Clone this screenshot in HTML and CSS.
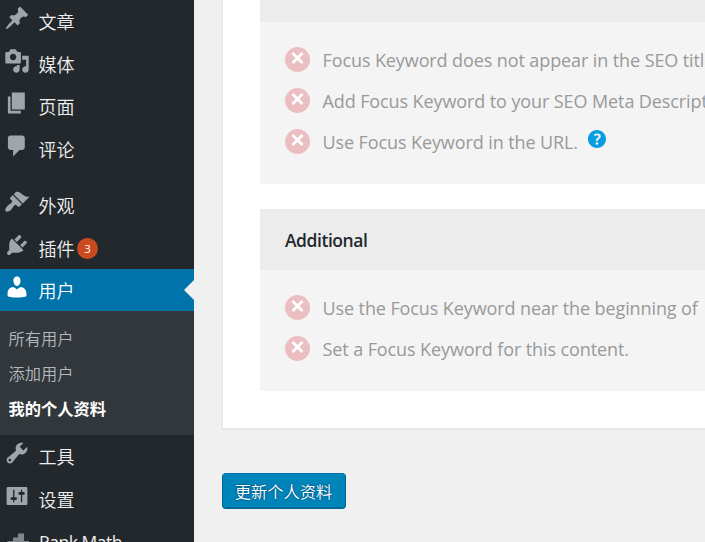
FILE: index.html
```html
<!DOCTYPE html>
<html lang="zh-CN">
<head>
<meta charset="utf-8">
<title>个人资料</title>
<link rel="stylesheet" href="styles.css">
</head>
<body>
<nav class="sidebar">
  <a class="item"><svg class="icon" viewBox="0 0 20 20"><path d="M10.44 3.02l1.82-1.82 6.36 6.35-1.83 1.82c-1.05-.68-2.48-.57-3.41.36l-.75.75c-.92.93-1.04 2.35-.35 3.41l-1.83 1.82-2.41-2.41-2.8 2.79c-.42.42-3.38 2.71-3.8 2.29s1.86-3.39 2.28-3.81l2.79-2.79L4.1 9.36l1.83-1.82c1.05.69 2.48.57 3.4-.36l.75-.75c.93-.92 1.05-2.35.36-3.41z"/></svg><span>文章</span></a>
  <a class="item"><svg class="icon" viewBox="0 0 20 20"><path d="M13 11V4c0-.55-.45-1-1-1h-1.67L9 1H5L3.67 3H2c-.55 0-1 .45-1 1v7c0 .55.45 1 1 1h10c.55 0 1-.45 1-1zM7 4.5c1.38 0 2.5 1.12 2.5 2.5S8.38 9.5 7 9.5 4.5 8.38 4.5 7 5.62 4.5 7 4.5zM14 6h5v10.5c0 1.38-1.12 2.5-2.5 2.5S14 17.88 14 16.5s1.12-2.5 2.5-2.5c.17 0 .34.02.5.05V9h-3V6zm-4 8.05V13h2v3.5c0 1.38-1.12 2.5-2.5 2.5S7 17.88 7 16.5 8.12 14 9.5 14c.17 0 .34.02.5.05z"/></svg><span>媒体</span></a>
  <a class="item"><svg class="icon" viewBox="0 0 20 20"><path d="M6 15V2h10v13H6zm-1 1h8v2H3V5h2v11z"/></svg><span>页面</span></a>
  <a class="item"><svg class="icon" viewBox="0 0 20 20"><path d="M5 2h9c1.1 0 2 .9 2 2v7c0 1.1-.9 2-2 2h-2l-5 5v-5H5c-1.1 0-2-.9-2-2V4c0-1.1.9-2 2-2z"/></svg><span>评论</span></a>
  <div class="separator"></div>
  <a class="item"><svg class="icon" viewBox="0 0 20 20"><path d="M14.48 11.06L7.41 3.99l1.5-1.5c.5-.56 2.3-.47 3.51.32 1.21.8 1.43 1.28 2.91 2.1 1.18.64 2.45 1.26 4.45.85zm-.71.71L6.7 4.7 4.93 6.47c-.39.39-.39 1.02 0 1.41l1.06 1.06c.39.39.39 1.03 0 1.42-.6.6-1.43 1.11-2.21 1.69-.35.26-.7.53-1.01.84C1.43 14.23.4 16.08 1.4 17.07c.99 1 2.84-.03 4.18-1.36.31-.31.58-.66.85-1.02.57-.78 1.08-1.61 1.69-2.21.39-.39 1.02-.39 1.41 0l1.06 1.06c.39.39 1.02.39 1.41 0z"/></svg><span>外观</span></a>
  <a class="item"><svg class="icon" viewBox="0 0 20 20"><path d="M13.11 4.36L9.87 7.6 8 5.73l3.24-3.24c.35-.34 1.05-.2 1.56.32.52.51.66 1.21.31 1.55zm-8 1.77l.91-1.12 9.01 9.01-1.19.84c-.71.71-2.63 1.16-3.82 1.16H6.14L4.9 17.26c-.59.59-1.54.59-2.12 0-.59-.58-.59-1.53 0-2.12l1.24-1.24v-3.88c0-1.13.4-3.19 1.09-3.89zm7.26 3.97l3.24-3.24c.34-.35 1.04-.21 1.55.31.52.51.66 1.21.31 1.55l-3.24 3.25z"/></svg><span>插件</span><b class="count">3</b></a>
  <a class="item current"><svg class="icon" viewBox="0 0 20 20"><path d="M10 9.25c-2.27 0-2.73-3.44-2.73-3.44C7 4.02 7.82 2 9.97 2c2.16 0 2.98 2.02 2.71 3.81 0 0-.41 3.44-2.68 3.44zm0 2.57L12.72 10c2.39 0 4.52 2.33 4.52 4.53v2.49s-3.65 1.13-7.24 1.13c-3.65 0-7.24-1.13-7.24-1.13v-2.49c0-2.25 1.94-4.48 4.47-4.48z"/></svg><span>用户</span></a>
  <div class="submenu">
    <a>所有用户</a>
    <a>添加用户</a>
    <a class="active">我的个人资料</a>
  </div>
  <a class="item"><svg class="icon" viewBox="0 0 20 20"><path d="M16.68 9.77c-1.34 1.34-3.3 1.67-4.95.99l-5.41 6.52c-.99.99-2.59.99-3.58 0s-.99-2.59 0-3.57l6.52-5.42c-.68-1.65-.35-3.61.99-4.95 1.28-1.28 3.12-1.62 4.72-1.06l-2.89 2.89 2.82 2.82 2.86-2.87c.53 1.58.18 3.39-1.08 4.65zM3.81 16.21c.4.39 1.04.39 1.43 0 .4-.4.4-1.04 0-1.43-.39-.4-1.03-.4-1.43 0-.39.39-.39 1.03 0 1.43z"/></svg><span>工具</span></a>
  <a class="item"><svg class="icon" viewBox="0 0 20 20"><path d="M18 16V4c0-.55-.45-1-1-1H3c-.55 0-1 .45-1 1v12c0 .55.45 1 1 1h14c.55 0 1-.45 1-1zM8 11h1c.55 0 1 .45 1 1s-.45 1-1 1H8v1.5c0 .28-.22.5-.5.5s-.5-.22-.5-.5V13H6c-.55 0-1-.45-1-1s.45-1 1-1h1V5.5c0-.28.22-.5.5-.5s.5.22.5.5V11zm5-2h-1c-.55 0-1-.45-1-1s.45-1 1-1h1V5.5c0-.28.22-.5.5-.5s.5.22.5.5V7h1c.55 0 1 .45 1 1s-.45 1-1 1h-1v5.5c0 .28-.22.5-.5.5s-.5-.22-.5-.5V9z"/></svg><span>设置</span></a>
  <a class="item"><svg class="icon dim" viewBox="0 0 26 26"><path d="M3.500 14h5.500V10.500h5V6.500h6V14h5V23H3.500z"/></svg><span class="latin">Rank Math</span></a>
</nav>
<main class="content">
  <section class="card">
    <div class="group">
      <h3 class="group-title"></h3>
      <ul class="checks">
        <li><i class="fail"><svg viewBox="0 0 26 26"><path d="M7.500 6l10 10M17.500 6l-10 10"/></svg></i><span>Focus Keyword does not appear in the SEO title.</span></li>
        <li><i class="fail"><svg viewBox="0 0 26 26"><path d="M7.500 6l10 10M17.500 6l-10 10"/></svg></i><span>Add Focus Keyword to your SEO Meta Description.</span></li>
        <li><i class="fail"><svg viewBox="0 0 26 26"><path d="M7.500 6l10 10M17.500 6l-10 10"/></svg></i><span>Use Focus Keyword in the URL.</span><svg class="help" viewBox="3 3 14 14"><path d="M17 10c0-3.87-3.14-7-7-7-3.87 0-7 3.13-7 7s3.130 7 7 7c3.860 0 7-3.130 7-7zm-6.300 1.480H9.140v-.43c0-.38.08-.7.24-.98s.46-.57.88-.89c.41-.29.68-.53.81-.71.14-.18.2-.39.2-.62 0-.25-.09-.44-.28-.58-.19-.13-.45-.19-.79-.19-.58 0-1.250.19-2 .57l-.64-1.280c.87-.49 1.800-.74 2.770-.74.81 0 1.450.2 1.920.58.48.39.71.91.71 1.550 0 .43-.09.8-.29 1.110-.19.32-.57.67-1.110 1.060-.38.28-.61.49-.71.63-.1.15-.15.34-.15.57v.35zm-1.470 2.740c-.18-.17-.27-.42-.27-.73 0-.33.08-.58.26-.75s.43-.25.77-.25c.32 0 .57.09.75.26s.27.42.27.74c0 .3-.09.55-.27.72-.18.18-.43.27-.75.27-.33 0-.58-.09-.76-.26z"/></svg></li>
      </ul>
    </div>
    <div class="group">
      <h3 class="group-title">Additional</h3>
      <ul class="checks">
        <li><i class="fail"><svg viewBox="0 0 26 26"><path d="M7.500 6l10 10M17.500 6l-10 10"/></svg></i><span>Use the Focus Keyword near the beginning of</span></li>
        <li><i class="fail"><svg viewBox="0 0 26 26"><path d="M7.500 6l10 10M17.500 6l-10 10"/></svg></i><span>Set a Focus Keyword for this content.</span></li>
      </ul>
    </div>
  </section>
  <button class="submit">更新个人资料</button>
</main>
</body>
</html>
```
FILE: styles.css
```css
* { box-sizing: border-box; }
body {
  margin: 0;
  width: 705px;
  height: 542px;
  overflow: hidden;
  display: flex;
  background: #f0f0f0;
  font-family: "Open Sans", "Noto Sans CJK SC", sans-serif;
}
.sidebar {
  width: 194px;
  flex: none;
  height: 542px;
  overflow: hidden;
  background: #23282d;
}
.item {
  display: flex;
  height: 42.5px;
  padding-left: 3.5px;
  color: #eee;
  font-size: 18px;
  line-height: 42.5px;
}
.item span {
  margin-left: 9px;
  font-family: "Noto Sans CJK SC", sans-serif;
  font-weight: 350;
}
.item .latin {
  margin-left: 9.5px;
  padding-top: 1px;
  font-family: "Open Sans", sans-serif;
  font-size: 17.5px;
  font-weight: 400;
  letter-spacing: -.5px;
}
.icon {
  width: 26px;
  height: 26px;
  flex: none;
  margin-top: 5.3px;
  fill: #a0a5aa;
}
.icon.dim { margin-top: 6.5px; fill: #82878c; }
.count {
  width: 21px;
  height: 21px;
  margin: 11px 0 0 2.5px;
  border-radius: 50%;
  background: #ca4a1f;
  color: #fff;
  font: 11.5px/21px "Open Sans", sans-serif;
  text-align: center;
}
.separator { height: 14px; }
.current {
  position: relative;
  height: 42px;
  background: #0073aa;
  color: #fff;
}
.current .icon { fill: #fff; }
.current::after {
  content: "";
  position: absolute;
  right: 0;
  top: 11px;
  border: 10px solid transparent;
  border-left: 0;
  border-right-color: #f0f0f0;
}
.submenu {
  height: 124px;
  padding: 10px 0 0 8.5px;
  background: #32373c;
}
.submenu a {
  display: block;
  height: 35px;
  font: 350 16.25px/35px "Noto Sans CJK SC", sans-serif;
  color: #b4b9be;
}
.submenu .active { color: #fff; font-weight: 700; }
.content { flex: 1; padding-left: 28px; min-width: 0; }
.card {
  height: 429px;
  padding-left: 37px;
  overflow: hidden;
  background: #fff;
  border: 1px solid #e5e5e5;
  border-top: 0;
  border-right: 0;
  box-shadow: 0 1px 1px rgba(0, 0, 0, .04);
}
.group { background: #f4f4f4; margin-bottom: 25px; }
.group-title {
  height: 61px;
  margin: 0;
  padding-left: 25px;
  background: #ececec;
  color: #23282d;
  font-size: 17.5px;
  font-weight: 600;
  line-height: 62px;
  letter-spacing: -.45px;
}
.group:first-child .group-title { height: 22px; }
.checks { margin: 0; padding: 24.5px 0 14.5px 25px; list-style: none; }
.checks li {
  display: flex;
  height: 41px;
  color: #999;
  font-size: 18px;
  line-height: 27px;
  letter-spacing: -.1px;
  white-space: nowrap;
}
.fail {
  width: 25px;
  height: 25px;
  flex: none;
  margin-right: 12.5px;
  border-radius: 50%;
  background: #ebbfc2;
}
.fail svg {
  display: block;
  width: 26px;
  height: 26px;
  fill: none;
  stroke: #fff;
  stroke-width: 2.8;
}
.help { width: 18px; height: 18px; margin: 1px 0 0 10px; fill: #069de3; }
.submit {
  display: block;
  width: 124px;
  height: 36px;
  margin-top: 44px;
  padding: 0 1px 0 0;
  border: 1px solid;
  border-color: #0073aa #006799 #006799;
  border-radius: 4px;
  background: #0085ba;
  box-shadow: inset 0 -1px 0 #006799;
  color: #fff;
  font: 350 16.25px/32px "Noto Sans CJK SC", sans-serif;
  text-shadow: 0 -1px 1px #006799, 1px 0 1px #006799, 0 1px 1px #006799, -1px 0 1px #006799;
}
```
